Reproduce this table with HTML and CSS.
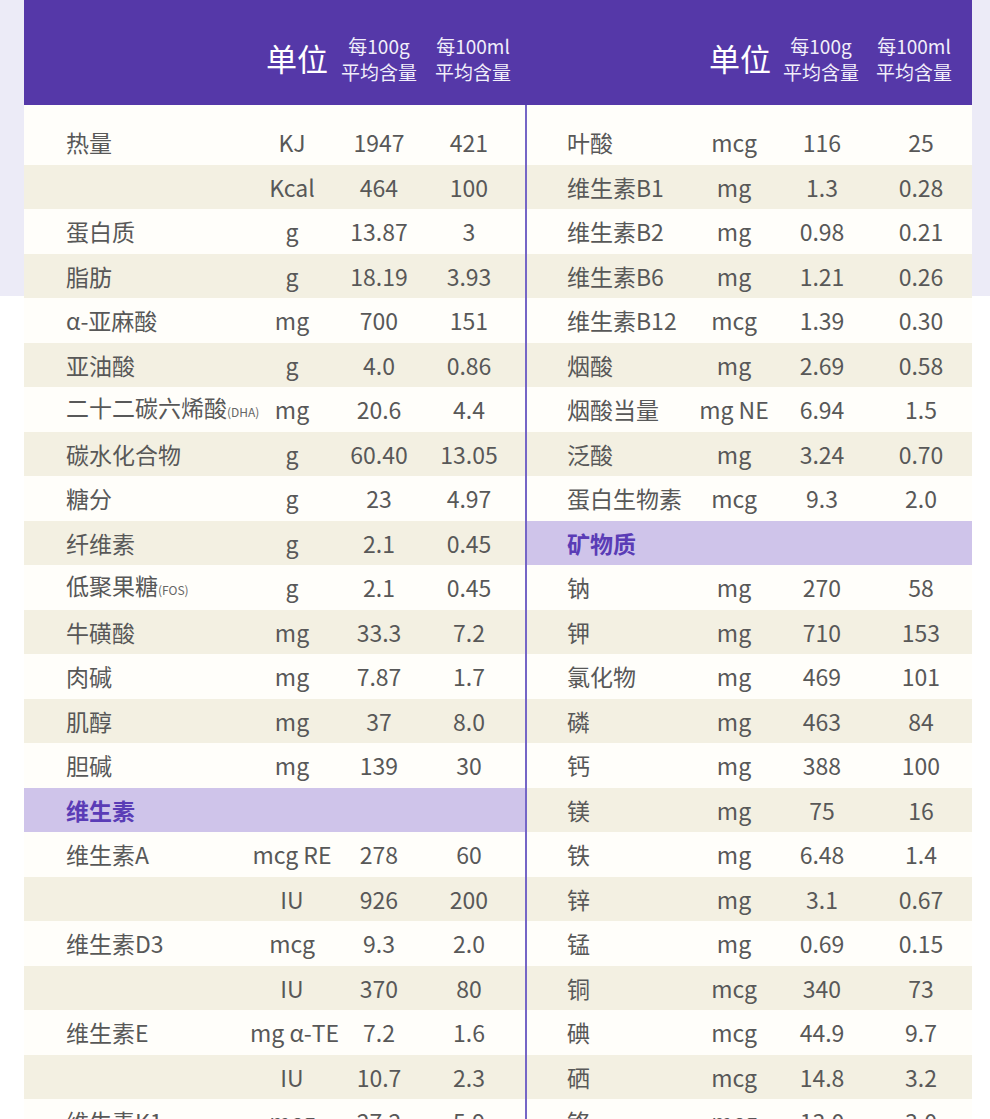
FILE: index.html
```html
<!DOCTYPE html>
<html lang="zh-CN">
<head>
<meta charset="utf-8">
<title>营养成分表</title>
<link rel="stylesheet" href="styles.css">
</head>
<body>
<div class="page">
  <div class="sheet">
    <div class="head">
      <div class="head-half head-left">
        <div class="h-unit">单位</div>
        <div class="h-col"><span>每100g</span><span>平均含量</span></div>
        <div class="h-col"><span>每100ml</span><span>平均含量</span></div>
      </div>
      <div class="head-half head-right">
        <div class="h-unit">单位</div>
        <div class="h-col"><span>每100g</span><span>平均含量</span></div>
        <div class="h-col"><span>每100ml</span><span>平均含量</span></div>
      </div>
    </div>
    <div class="body">
      <div class="half left">
        <div class="row"><span class="n">热量</span><span class="u">KJ</span><span class="g">1947</span><span class="m">421</span></div>
        <div class="row"><span class="n"></span><span class="u">Kcal</span><span class="g">464</span><span class="m">100</span></div>
        <div class="row"><span class="n">蛋白质</span><span class="u">g</span><span class="g">13.87</span><span class="m">3</span></div>
        <div class="row"><span class="n">脂肪</span><span class="u">g</span><span class="g">18.19</span><span class="m">3.93</span></div>
        <div class="row"><span class="n">α-亚麻酸</span><span class="u">mg</span><span class="g">700</span><span class="m">151</span></div>
        <div class="row"><span class="n">亚油酸</span><span class="u">g</span><span class="g">4.0</span><span class="m">0.86</span></div>
        <div class="row"><span class="n">二十二碳六烯酸<small>(DHA)</small></span><span class="u">mg</span><span class="g">20.6</span><span class="m">4.4</span></div>
        <div class="row"><span class="n">碳水化合物</span><span class="u">g</span><span class="g">60.40</span><span class="m">13.05</span></div>
        <div class="row"><span class="n">糖分</span><span class="u">g</span><span class="g">23</span><span class="m">4.97</span></div>
        <div class="row"><span class="n">纤维素</span><span class="u">g</span><span class="g">2.1</span><span class="m">0.45</span></div>
        <div class="row"><span class="n">低聚果糖<small>(FOS)</small></span><span class="u">g</span><span class="g">2.1</span><span class="m">0.45</span></div>
        <div class="row"><span class="n">牛磺酸</span><span class="u">mg</span><span class="g">33.3</span><span class="m">7.2</span></div>
        <div class="row"><span class="n">肉碱</span><span class="u">mg</span><span class="g">7.87</span><span class="m">1.7</span></div>
        <div class="row"><span class="n">肌醇</span><span class="u">mg</span><span class="g">37</span><span class="m">8.0</span></div>
        <div class="row"><span class="n">胆碱</span><span class="u">mg</span><span class="g">139</span><span class="m">30</span></div>
        <div class="row section"><span class="n">维生素</span></div>
        <div class="row"><span class="n">维生素A</span><span class="u">mcg RE</span><span class="g">278</span><span class="m">60</span></div>
        <div class="row"><span class="n"></span><span class="u">IU</span><span class="g">926</span><span class="m">200</span></div>
        <div class="row"><span class="n">维生素D3</span><span class="u">mcg</span><span class="g">9.3</span><span class="m">2.0</span></div>
        <div class="row"><span class="n"></span><span class="u">IU</span><span class="g">370</span><span class="m">80</span></div>
        <div class="row"><span class="n">维生素E</span><span class="u">mg α-TE</span><span class="g">7.2</span><span class="m">1.6</span></div>
        <div class="row"><span class="n"></span><span class="u">IU</span><span class="g">10.7</span><span class="m">2.3</span></div>
        <div class="row"><span class="n">维生素K1</span><span class="u">mcg</span><span class="g">27.2</span><span class="m">5.9</span></div>
      </div>
      <div class="half right">
        <div class="row"><span class="n">叶酸</span><span class="u">mcg</span><span class="g">116</span><span class="m">25</span></div>
        <div class="row"><span class="n">维生素B1</span><span class="u">mg</span><span class="g">1.3</span><span class="m">0.28</span></div>
        <div class="row"><span class="n">维生素B2</span><span class="u">mg</span><span class="g">0.98</span><span class="m">0.21</span></div>
        <div class="row"><span class="n">维生素B6</span><span class="u">mg</span><span class="g">1.21</span><span class="m">0.26</span></div>
        <div class="row"><span class="n">维生素B12</span><span class="u">mcg</span><span class="g">1.39</span><span class="m">0.30</span></div>
        <div class="row"><span class="n">烟酸</span><span class="u">mg</span><span class="g">2.69</span><span class="m">0.58</span></div>
        <div class="row"><span class="n">烟酸当量</span><span class="u">mg NE</span><span class="g">6.94</span><span class="m">1.5</span></div>
        <div class="row"><span class="n">泛酸</span><span class="u">mg</span><span class="g">3.24</span><span class="m">0.70</span></div>
        <div class="row"><span class="n">蛋白生物素</span><span class="u">mcg</span><span class="g">9.3</span><span class="m">2.0</span></div>
        <div class="row section"><span class="n">矿物质</span></div>
        <div class="row"><span class="n">钠</span><span class="u">mg</span><span class="g">270</span><span class="m">58</span></div>
        <div class="row"><span class="n">钾</span><span class="u">mg</span><span class="g">710</span><span class="m">153</span></div>
        <div class="row"><span class="n">氯化物</span><span class="u">mg</span><span class="g">469</span><span class="m">101</span></div>
        <div class="row"><span class="n">磷</span><span class="u">mg</span><span class="g">463</span><span class="m">84</span></div>
        <div class="row"><span class="n">钙</span><span class="u">mg</span><span class="g">388</span><span class="m">100</span></div>
        <div class="row"><span class="n">镁</span><span class="u">mg</span><span class="g">75</span><span class="m">16</span></div>
        <div class="row"><span class="n">铁</span><span class="u">mg</span><span class="g">6.48</span><span class="m">1.4</span></div>
        <div class="row"><span class="n">锌</span><span class="u">mg</span><span class="g">3.1</span><span class="m">0.67</span></div>
        <div class="row"><span class="n">锰</span><span class="u">mg</span><span class="g">0.69</span><span class="m">0.15</span></div>
        <div class="row"><span class="n">铜</span><span class="u">mcg</span><span class="g">340</span><span class="m">73</span></div>
        <div class="row"><span class="n">碘</span><span class="u">mcg</span><span class="g">44.9</span><span class="m">9.7</span></div>
        <div class="row"><span class="n">硒</span><span class="u">mcg</span><span class="g">14.8</span><span class="m">3.2</span></div>
        <div class="row"><span class="n">铬</span><span class="u">mcg</span><span class="g">13.0</span><span class="m">3.0</span></div>
      </div>
    </div>
  </div>
</div>
</body>
</html>
```

FILE: styles.css
```css
html, body {
  margin: 0;
  padding: 0;
  background: #ffffff;
}

.page {
  width: 990px;
  height: 1119px;
  overflow: hidden;
  background: linear-gradient(#ecebf7 0, #ecebf7 296px, #ffffff 296px);
  padding: 0 18px 0 24px;
  box-sizing: border-box;
  font-family: "Noto Sans CJK SC", "Noto Sans", sans-serif;
  color: #585858;
}

.sheet {
  width: 948px;
}

.head {
  display: flex;
  height: 105px;
  background: #5538a8;
  color: #ffffff;
}

.head-half {
  display: flex;
  justify-content: flex-end;
  align-items: center;
  box-sizing: border-box;
  padding-top: 10px;
}

.head-left {
  width: 503px;
  padding-right: 11px;
  gap: 8px;
}

.head-right {
  flex: 1;
  padding-right: 15px;
  gap: 7px;
}

.h-unit {
  font-size: 31px;
  line-height: 40px;
  font-weight: 400;
}

.h-col {
  display: flex;
  flex-direction: column;
  align-items: center;
  font-size: 19px;
  line-height: 28px;
  color: #f1eefa;
  width: 86px;
}

.h-col span {
  display: block;
  height: 26px;
}

.body {
  display: flex;
  background: #fffefa;
}

.half {
  display: flex;
  flex-direction: column;
  padding-top: 15px;
}

.left {
  width: 503px;
  box-sizing: border-box;
  border-right: 2px solid #7566c6;
}

.right {
  flex: 1;
}

.row {
  display: grid;
  height: 44.5px;
  align-items: center;
  font-size: 23px;
  line-height: 30px;
  white-space: nowrap;
}

.row:nth-child(even) {
  background: #f3f0e2;
}

.left .row {
  grid-template-columns: 226px 84px 90px 90px;
}

.right .row {
  grid-template-columns: 161px 92px 84px 108px;
}

.n {
  padding-left: 42px;
}

.right .n {
  padding-left: 40px;
}

.u, .g, .m {
  text-align: center;
}

.right .m {
  padding-left: 6px;
}

.n small {
  font-size: 12px;
  color: #666666;
}

.row.section {
  background: #cfc4ea;
  display: flex;
}

.row.section .n {
  color: #5a3cb6;
  font-weight: 700;
}
```
